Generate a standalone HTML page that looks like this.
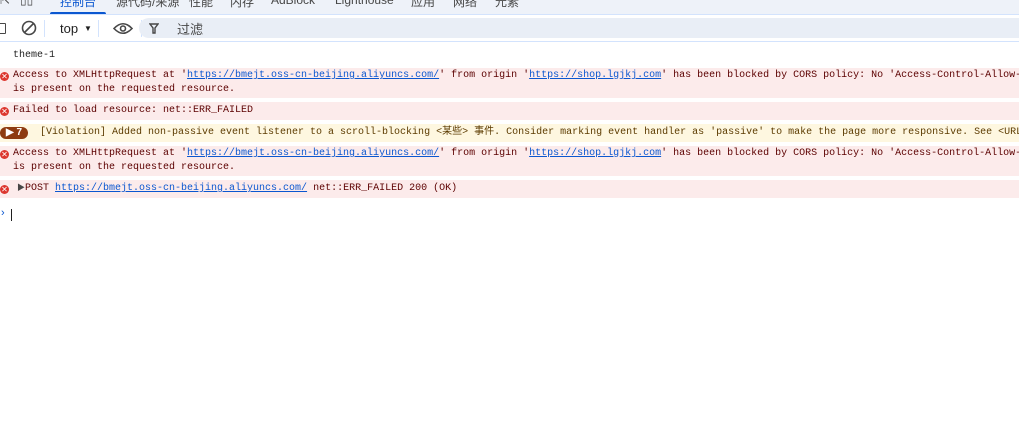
<!DOCTYPE html>
<html><head><meta charset="utf-8"><style>
*{margin:0;padding:0;box-sizing:border-box}
body{width:1019px;height:445px;background:#fff;overflow:hidden;position:relative;font-family:"Liberation Mono","Noto Sans CJK SC",monospace;font-size:10px}
.tabs{position:absolute;left:0;top:0;width:1019px;height:15px;background:#eef2f9;border-bottom:1px solid #d3e3fd;font-family:"Liberation Sans","Noto Sans CJK SC",sans-serif;font-size:12px;color:#474747;white-space:nowrap;overflow:hidden}
.tabs span{position:absolute;top:-7px}
.tb{position:absolute;left:0;top:15px;width:1019px;height:27px;background:#fff;border-bottom:1px solid #d3e3fd;font-family:"Liberation Sans","Noto Sans CJK SC",sans-serif;font-size:13px;color:#1f1f1f;overflow:hidden}
.sep{position:absolute;top:5px;width:1px;height:17px;background:#d3e3fd}
.filter{position:absolute;left:139px;top:3px;width:880px;height:20px;background:#e9eef6;border-radius:10px 0 0 10px}
.row{position:absolute;left:0;width:1019px;white-space:pre;line-height:14px;color:#5c0000;padding-left:13px;overflow:hidden}
.err{background:#fcebeb}
.warn{background:#fef7e0;color:#5c3b00}
a{color:#0b57d0;text-decoration:underline}
.ic{position:absolute;left:0;width:9px;height:9px;border-radius:50%;background:#dc362e;color:#fff;font-size:8px;line-height:9px;text-align:center;font-family:"Liberation Sans",sans-serif}
</style></head><body>
<div class="tabs">
<span style="left:0">&#8689;</span><span style="left:20px">▯▯</span>
<span style="left:60px;color:#0b57d0">控制台</span>
<div style="position:absolute;left:50px;top:12px;width:56px;height:3px;background:#0b57d0;border-radius:2px 2px 0 0"></div>
<span style="left:116px">源代码/来源</span><span style="left:189px">性能</span><span style="left:230px">内存</span><span style="left:271px">AdBlock</span><span style="left:335px">Lighthouse</span><span style="left:411px">应用</span><span style="left:453px">网络</span><span style="left:495px">元素</span>
</div>
<div class="tb">
<div style="position:absolute;left:-3px;top:8px;width:9px;height:11px;border:1.5px solid #474747;border-radius:1px"></div>
<svg style="position:absolute;left:21px;top:5px" width="16" height="16"><circle cx="8" cy="8" r="6.5" fill="none" stroke="#474747" stroke-width="1.6"/><line x1="3.5" y1="12.5" x2="12.5" y2="3.5" stroke="#474747" stroke-width="1.6"/></svg>
<div class="sep" style="left:44px"></div>
<span style="position:absolute;left:60px;top:6px">top</span><span style="position:absolute;left:84px;top:9px;font-size:8px">▼</span>
<div class="sep" style="left:98px"></div>
<svg style="position:absolute;left:113px;top:7px" width="20" height="13"><path d="M1 6.5Q10 -3 19 6.5Q10 16 1 6.5Z" fill="none" stroke="#474747" stroke-width="1.6"/><circle cx="10" cy="6.5" r="2.5" fill="none" stroke="#474747" stroke-width="1.6"/></svg>
<div class="sep" style="left:141px"></div>
<div class="filter"><svg style="position:absolute;left:10px;top:5px" width="10" height="11"><path d="M1 1H9L6 5V10H4V5Z" fill="none" stroke="#474747" stroke-width="1.4"/></svg><span style="position:absolute;left:38px;top:1px;color:#474747">过滤</span></div>
</div>
<div class="row" style="top:49px;color:#1f1f1f">theme-1</div>
<div class="row err" style="top:68px;height:30px;padding-top:1px"><div class="ic" style="top:4px">✕</div>Access to XMLHttpRequest at '<a>https://bmejt.oss-cn-beijing.aliyuncs.com/</a>' from origin '<a>https://shop.lgjkj.com</a>' has been blocked by CORS policy: No 'Access-Control-Allow-Origin' header
is present on the requested resource.</div>
<div class="row err" style="top:102px;height:18px;padding-top:2px"><div class="ic" style="top:5px">✕</div>Failed to load resource: net::ERR_FAILED</div>
<div class="row warn" style="top:124px;height:18px;padding-top:2px;padding-left:40px"><div style="position:absolute;left:0;top:3px;width:28px;height:12px;border-radius:6px;background:#8e3b10;color:#fff;font-size:10px;line-height:12px;font-family:'Liberation Sans',sans-serif;padding-left:6px;font-weight:bold">▶ 7</div>[Violation] Added non-passive event listener to a scroll-blocking &lt;某些&gt; 事件. Consider marking event handler as 'passive' to make the page more responsive. See &lt;URL&gt;</div>
<div class="row err" style="top:146px;height:30px;padding-top:1px"><div class="ic" style="top:4px">✕</div>Access to XMLHttpRequest at '<a>https://bmejt.oss-cn-beijing.aliyuncs.com/</a>' from origin '<a>https://shop.lgjkj.com</a>' has been blocked by CORS policy: No 'Access-Control-Allow-Origin' header
is present on the requested resource.</div>
<div class="row err" style="top:180px;height:18px;padding-top:2px;padding-left:17px"><div class="ic" style="top:5px">✕</div><span style="font-size:8px;color:#474747">▶</span>POST <a>https://bmejt.oss-cn-beijing.aliyuncs.com/</a> net::ERR_FAILED 200 (OK)</div>
<div style="position:absolute;left:1px;top:207px;color:#0b57d0;font-size:11px;font-family:'Liberation Sans',sans-serif">›</div>
<div style="position:absolute;left:11px;top:209px;width:1px;height:12px;background:#1f1f1f"></div>
</body></html>
